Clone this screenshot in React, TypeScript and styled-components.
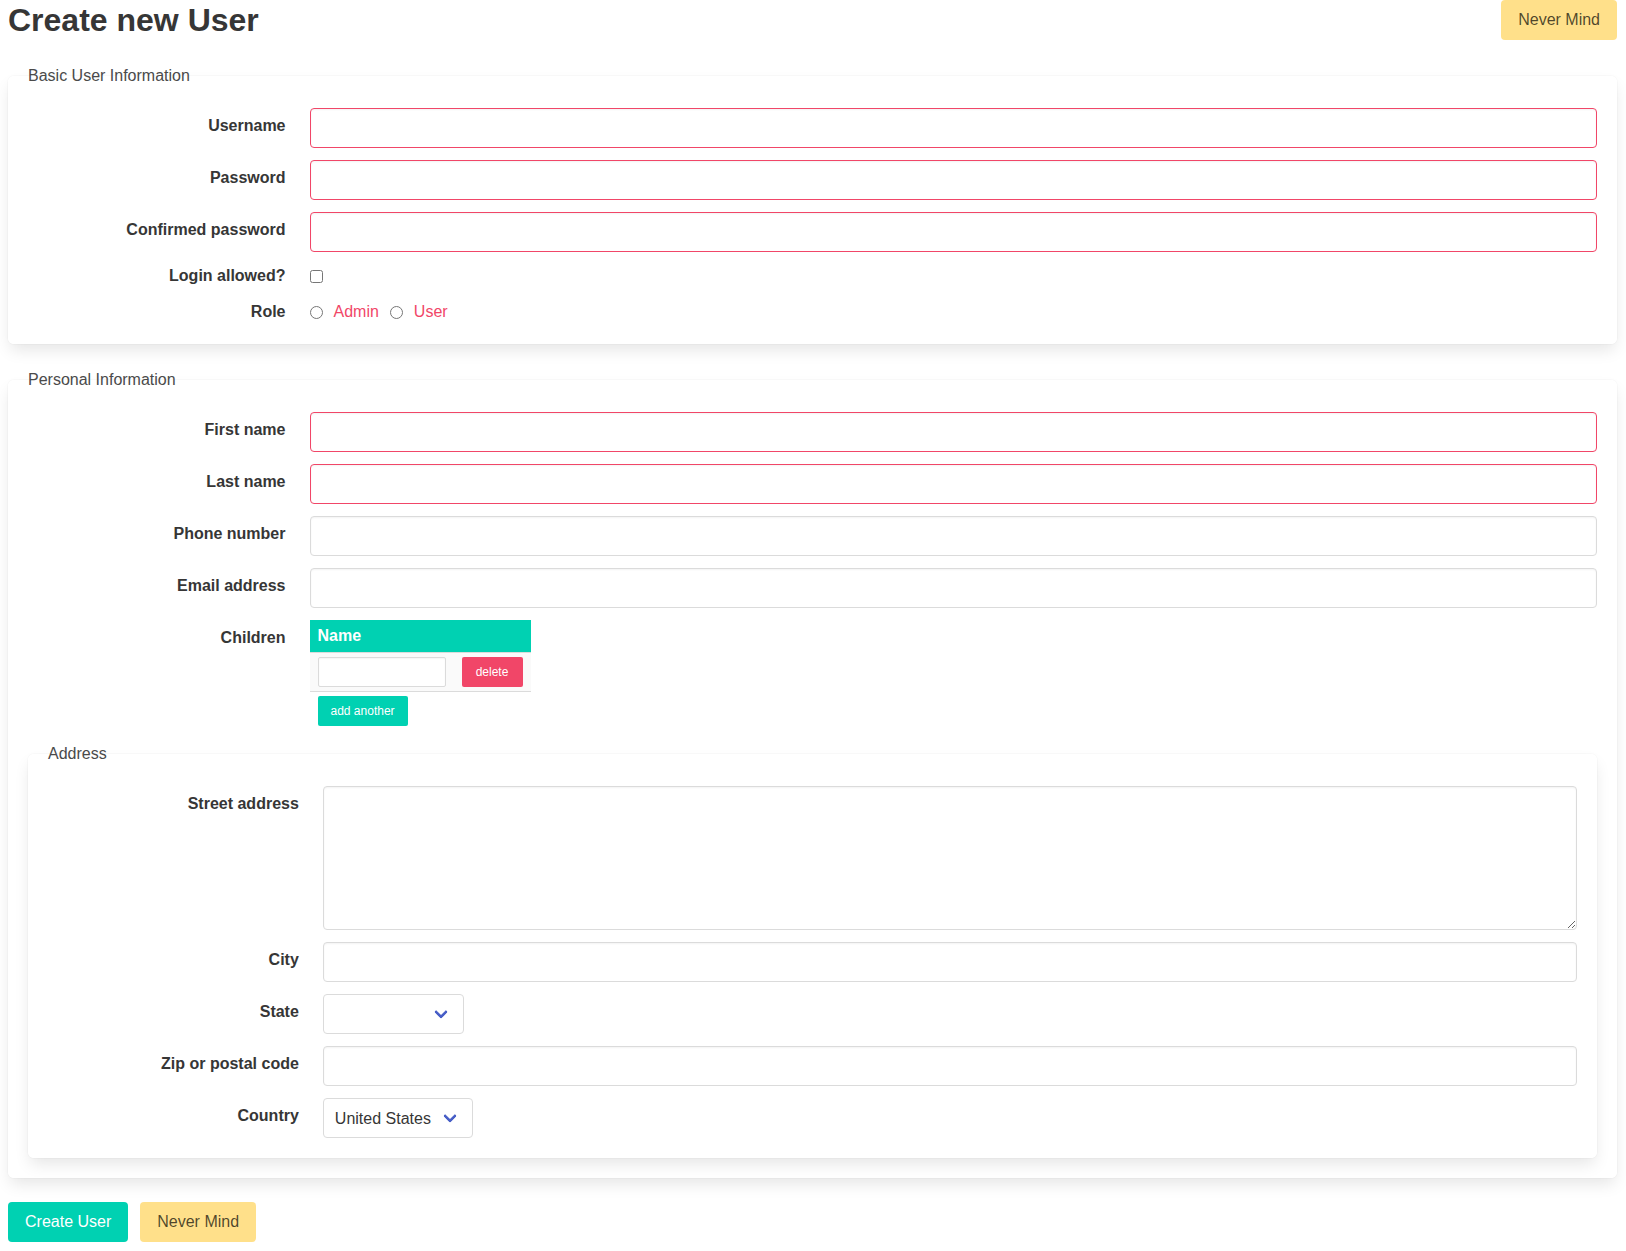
import React from "react";
import styled, { createGlobalStyle } from "styled-components";

const GlobalStyle = createGlobalStyle`
  *, *::before, *::after { box-sizing: border-box; }
  html, body {
    margin: 0;
    padding: 0;
    background: #ffffff;
  }
  body {
    font-family: "Liberation Sans", Arial, sans-serif;
    font-size: 16px;
    line-height: 1.5;
    color: #4a4a4a;
  }
`;

const Page = styled.div`
  padding: 0 9px 10px 8px;
`;

const Header = styled.div`
  display: flex;
  align-items: center;
  justify-content: space-between;
  margin-bottom: 24px;
`;

const Title = styled.h1`
  margin: 0;
  font-size: 32px;
  font-weight: 700;
  line-height: 1.125;
  color: #363636;
`;

const Button = styled.button<{ $variant: "primary" | "warning" | "danger"; $small?: boolean }>`
  display: inline-flex;
  align-items: center;
  justify-content: center;
  height: ${(p) => (p.$small ? "30px" : "40px")};
  padding: 0 ${(p) => (p.$small ? "12px" : "16px")};
  border: 1px solid transparent;
  border-radius: ${(p) => (p.$small ? "2px" : "4px")};
  font-family: inherit;
  font-size: ${(p) => (p.$small ? "12px" : "16px")};
  line-height: 1.5;
  cursor: pointer;
  white-space: nowrap;
  background: ${(p) =>
    p.$variant === "primary" ? "#00d1b2" : p.$variant === "danger" ? "#f14668" : "#ffe08a"};
  color: ${(p) => (p.$variant === "warning" ? "rgba(0, 0, 0, 0.7)" : "#ffffff")};
`;

const Box = styled.fieldset`
  margin: 0 0 24px;
  padding: 20px;
  min-width: 0;
  border: none;
  border-radius: 6px;
  background: #ffffff;
  box-shadow: 0 0.5em 1em -0.125em rgba(10, 10, 10, 0.1), 0 0 0 1px rgba(10, 10, 10, 0.02);
  &:last-child {
    margin-bottom: 0;
  }
`;

const Legend = styled.legend`
  padding: 0;
  font-size: 16px;
  line-height: 1.5;
  color: #4a4a4a;
`;

const Field = styled.div`
  display: flex;
  &:not(:last-child) {
    margin-bottom: 12px;
  }
`;

const FieldLabel = styled.div<{ $normal?: boolean }>`
  flex: 1 0 0;
  margin-right: 24px;
  text-align: right;
  padding-top: ${(p) => (p.$normal ? "6px" : "0")};
`;

const Label = styled.label`
  display: block;
  font-weight: 700;
  font-size: 16px;
  line-height: 1.5;
  color: #363636;
`;

const FieldBody = styled.div`
  flex: 5 1 0;
  display: flex;
  flex-direction: column;
  align-items: flex-start;
  min-width: 0;
`;

const TextInput = styled.input<{ $danger?: boolean }>`
  width: 100%;
  height: 40px;
  padding: 0 11px;
  border: 1px solid ${(p) => (p.$danger ? "#f14668" : "#dbdbdb")};
  border-radius: 4px;
  background: #ffffff;
  box-shadow: inset 0 0.0625em 0.125em rgba(10, 10, 10, 0.05);
  font-family: inherit;
  font-size: 16px;
  color: #363636;
  outline: none;
`;

const TextArea = styled.textarea`
  display: block;
  width: 100%;
  height: 144px;
  padding: 11px;
  border: 1px solid #dbdbdb;
  border-radius: 4px;
  background: #ffffff;
  box-shadow: inset 0 0.0625em 0.125em rgba(10, 10, 10, 0.05);
  font-family: inherit;
  font-size: 16px;
  color: #363636;
  resize: vertical;
  outline: none;
`;

const CheckRow = styled.div`
  display: flex;
  align-items: center;
  height: 24px;
`;

const Checkbox = styled.input`
  margin: 0;
  width: 13px;
  height: 13px;
`;

const RadioGroup = styled.div`
  display: flex;
  align-items: center;
  height: 24px;
  gap: 11px;
`;

const RadioLabel = styled.label`
  display: inline-flex;
  align-items: center;
  gap: 11px;
  color: #f14668;
  font-size: 16px;
  line-height: 1.5;
  cursor: pointer;
`;

const Radio = styled.input`
  margin: 0;
  width: 13px;
  height: 13px;
`;

const Table = styled.table`
  border-collapse: collapse;
  border-spacing: 0;
`;

const Th = styled.th`
  padding: 4px 8px;
  background: #00d1b2;
  color: #ffffff;
  font-weight: 700;
  text-align: left;
  line-height: 1.5;
  border-bottom: 1px solid #dbdbdb;
`;

const Tr = styled.tr`
  background: #fafafa;
`;

const Td = styled.td`
  padding: 4px 8px;
  vertical-align: top;
  border-bottom: 1px solid #dbdbdb;
`;

const SmallInput = styled.input`
  display: block;
  width: 128px;
  height: 30px;
  padding: 0 8px;
  border: 1px solid #dbdbdb;
  border-radius: 2px;
  background: #ffffff;
  box-shadow: inset 0 0.0625em 0.125em rgba(10, 10, 10, 0.05);
  font-family: inherit;
  font-size: 12px;
  outline: none;
`;

const DeleteButton = styled(Button)`
  width: 61px;
`;

const AddRow = styled.div`
  margin: 4px 0 4px 8px;
`;

const SelectWrap = styled.div`
  position: relative;
  display: inline-block;
  height: 40px;
  &::after {
    content: "";
    position: absolute;
    top: 50%;
    right: 18px;
    width: 10px;
    height: 10px;
    margin-top: -7px;
    border: 3px solid #485fc7;
    border-right: 0;
    border-top: 0;
    border-radius: 2px;
    transform: rotate(-45deg);
    transform-origin: center;
    pointer-events: none;
  }
`;

const Select = styled.select<{ $width?: number }>`
  appearance: none;
  -webkit-appearance: none;
  height: 40px;
  width: ${(p) => (p.$width ? `${p.$width}px` : "auto")};
  padding: 0 40px 0 11px;
  border: 1px solid #dbdbdb;
  border-radius: 4px;
  background: #ffffff;
  font-family: inherit;
  font-size: 16px;
  color: #363636;
  outline: none;
  cursor: pointer;
`;

const Actions = styled.div`
  display: flex;
  gap: 12px;
`;

type TextFieldProps = { label: string; danger?: boolean; type?: string };

function TextField({ label, danger, type = "text" }: TextFieldProps) {
  return (
    <Field>
      <FieldLabel $normal>
        <Label>{label}</Label>
      </FieldLabel>
      <FieldBody>
        <TextInput type={type} $danger={danger} />
      </FieldBody>
    </Field>
  );
}

export default function App() {
  return (
    <>
      <GlobalStyle />
      <Page>
        <Header>
          <Title>Create new User</Title>
          <Button $variant="warning">Never Mind</Button>
        </Header>

        <Box>
          <Legend>Basic User Information</Legend>
          <TextField label="Username" danger />
          <TextField label="Password" danger type="password" />
          <TextField label="Confirmed password" danger type="password" />
          <Field>
            <FieldLabel>
              <Label>Login allowed?</Label>
            </FieldLabel>
            <FieldBody>
              <CheckRow>
                <Checkbox type="checkbox" />
              </CheckRow>
            </FieldBody>
          </Field>
          <Field>
            <FieldLabel>
              <Label>Role</Label>
            </FieldLabel>
            <FieldBody>
              <RadioGroup>
                <RadioLabel>
                  <Radio type="radio" name="role" />
                  Admin
                </RadioLabel>
                <RadioLabel>
                  <Radio type="radio" name="role" />
                  User
                </RadioLabel>
              </RadioGroup>
            </FieldBody>
          </Field>
        </Box>

        <Box>
          <Legend>Personal Information</Legend>
          <TextField label="First name" danger />
          <TextField label="Last name" danger />
          <TextField label="Phone number" />
          <TextField label="Email address" />
          <Field>
            <FieldLabel $normal>
              <Label>Children</Label>
            </FieldLabel>
            <FieldBody>
              <Table>
                <thead>
                  <tr>
                    <Th colSpan={2}>Name</Th>
                  </tr>
                </thead>
                <tbody>
                  <Tr>
                    <Td>
                      <SmallInput type="text" />
                    </Td>
                    <Td>
                      <DeleteButton $variant="danger" $small>
                        delete
                      </DeleteButton>
                    </Td>
                  </Tr>
                </tbody>
              </Table>
              <AddRow>
                <Button $variant="primary" $small>
                  add another
                </Button>
              </AddRow>
            </FieldBody>
          </Field>

          <Box>
            <Legend>Address</Legend>
            <Field>
              <FieldLabel $normal>
                <Label>Street address</Label>
              </FieldLabel>
              <FieldBody>
                <TextArea />
              </FieldBody>
            </Field>
            <TextField label="City" />
            <Field>
              <FieldLabel $normal>
                <Label>State</Label>
              </FieldLabel>
              <FieldBody>
                <SelectWrap>
                  <Select $width={141} defaultValue="">
                    <option value=""></option>
                    <option value="CA">California</option>
                    <option value="NY">New York</option>
                  </Select>
                </SelectWrap>
              </FieldBody>
            </Field>
            <TextField label="Zip or postal code" />
            <Field>
              <FieldLabel $normal>
                <Label>Country</Label>
              </FieldLabel>
              <FieldBody>
                <SelectWrap>
                  <Select defaultValue="US">
                    <option value="US">United States</option>
                  </Select>
                </SelectWrap>
              </FieldBody>
            </Field>
          </Box>
        </Box>

        <Actions>
          <Button $variant="primary">Create User</Button>
          <Button $variant="warning">Never Mind</Button>
        </Actions>
      </Page>
    </>
  );
}
